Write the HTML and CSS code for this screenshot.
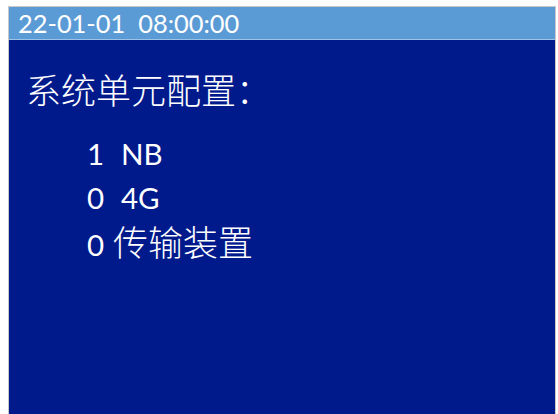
FILE: index.html
```html
<!DOCTYPE html>
<html lang="zh">
<head>
<meta charset="utf-8">
<link rel="stylesheet" href="styles.css">
</head>
<body>
<div class="screen">
  <div class="header">22-01-01&nbsp;&nbsp;08:00:00</div>
  <div class="content">
    <div class="title">系统单元配置：</div>
    <div class="list">
      <div class="row"><span class="num">1</span><span class="name">NB</span></div>
      <div class="row"><span class="num">0</span><span class="name">4G</span></div>
      <div class="row row-cjk"><span class="num num-tight">0</span><span class="name cjk">传输装置</span></div>
    </div>
  </div>
</div>
</body>
</html>
```
FILE: styles.css
```css
html, body {
  margin: 0;
  padding: 0;
  background: #ffffff;
  overflow: hidden;
}
body {
  padding: 6px 0 0 8px;
  width: 558px;
  height: 414px;
  box-sizing: border-box;
}
.screen {
  width: 548px;
  height: 420px;
  box-sizing: border-box;
  border: 1px solid #c8c8c8;
  border-bottom: none;
  background: #001a8c;
  color: #ffffff;
  font-family: Lato, "Noto Sans CJK SC", sans-serif;
}
.header {
  height: 33px;
  box-sizing: border-box;
  background: #5b9bd5;
  border-bottom: 1px solid #9dc3e6;
  font-size: 25.4px;
  line-height: 32px;
  padding-left: 9px;
}
.content {
  padding: 27px 0 0 17px;
}
.title {
  font-family: "Noto Sans CJK SC", sans-serif;
  font-weight: 300;
  font-size: 35px;
  line-height: 44px;
  height: 44px;
}
.list {
  padding: 21px 0 0 61px;
  display: flex;
  flex-direction: column;
}
.row {
  display: flex;
  align-items: baseline;
  font-size: 29.5px;
  line-height: 44px;
  height: 44px;
}
.row-cjk {
  margin-top: -1px;
}
.num {
  width: 34px;
  flex: none;
}
.num-tight {
  width: 26px;
}
.cjk {
  font-family: "Noto Sans CJK SC", sans-serif;
  font-weight: 300;
  font-size: 35px;
}
```
